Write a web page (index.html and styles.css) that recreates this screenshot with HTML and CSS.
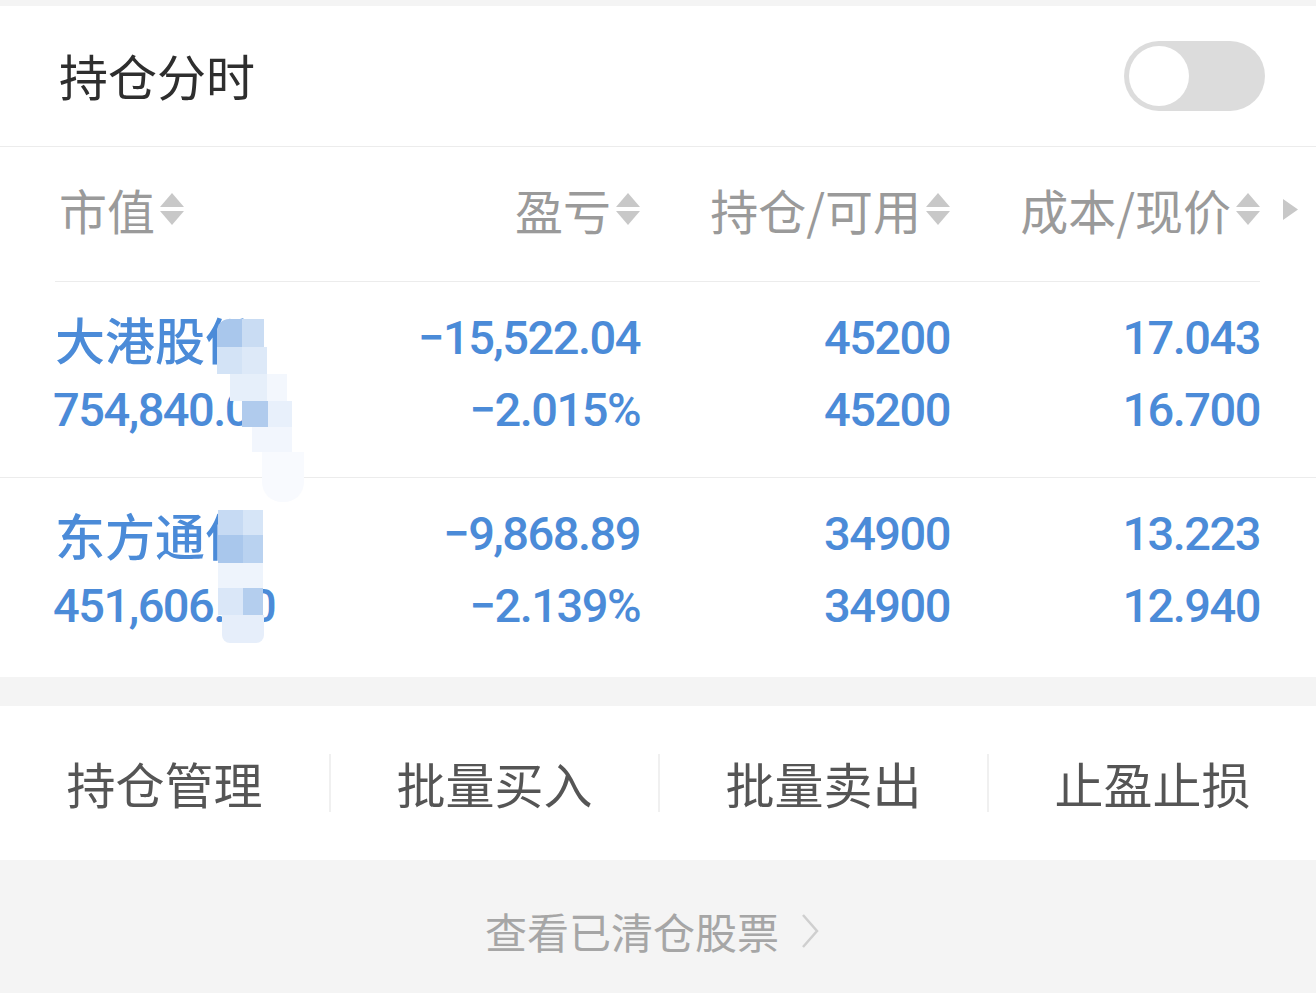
FILE: index.html
```html
<!DOCTYPE html>
<html>
<head>
    <meta charset="utf-8">
    <title>持仓</title>
    <link rel="stylesheet" href="styles.css">
</head>
<body>
    <div class="top-gap"></div>

    <!-- title row with switch -->
    <div class="title-row">
        <span class="title">持仓分时</span>
        <div class="switch"><div class="knob"></div></div>
    </div>

    <div class="holdings">
        <div class="thead">
            <div class="th th-first">市值
                <svg class="sort" viewBox="0 0 24 32"><polygon points="0,14 12,0 24,14"/><polygon points="0,18 24,18 12,32"/></svg>
            </div>
            <div class="th">盈亏
                <svg class="sort" viewBox="0 0 24 32"><polygon points="0,14 12,0 24,14"/><polygon points="0,18 24,18 12,32"/></svg>
            </div>
            <div class="th">持仓/可用
                <svg class="sort" viewBox="0 0 24 32"><polygon points="0,14 12,0 24,14"/><polygon points="0,18 24,18 12,32"/></svg>
            </div>
            <div class="th">成本/现价
                <svg class="sort" viewBox="0 0 24 32"><polygon points="0,14 12,0 24,14"/><polygon points="0,18 24,18 12,32"/></svg>
            </div>
            <div class="th-more">
                <svg class="more" viewBox="0 0 15 21"><polygon points="0,0 15,10.5 0,21"/></svg>
            </div>
        </div>
        <div class="thead-line"></div>

        <div class="row">
            <div class="cell cell-name">
                <div class="name">大港股份</div>
                <div class="num">754,840.00</div>
            </div>
            <div class="cell"><div class="num">−15,522.04</div><div class="num">−2.015%</div></div>
            <div class="cell"><div class="num">45200</div><div class="num">45200</div></div>
            <div class="cell"><div class="num">17.043</div><div class="num">16.700</div></div>
            <!-- mosaic over the name -->
            <div class="mosaic">
                <i class="b1" style="left:217px;top:37px;width:25px;height:28px;background:#a9c7ec;border-top-left-radius:12px"></i>
                <i class="b1" style="left:242px;top:37px;width:22px;height:28px;background:#c9dcf3"></i>
                <i class="b1" style="left:217px;top:65px;width:25px;height:27px;background:#d3e3f6"></i>
                <i class="b1" style="left:242px;top:65px;width:25px;height:27px;background:#dde9f8"></i>
                <i class="b1" style="left:230px;top:92px;width:37px;height:27px;background:#e6effa"></i>
                <i class="b1" style="left:267px;top:92px;width:20px;height:27px;background:#f3f7fd"></i>
                <i class="b1" style="left:242px;top:119px;width:26px;height:26px;background:#b0cbed"></i>
                <i class="b1" style="left:268px;top:119px;width:24px;height:26px;background:#e8f0fb"></i>
                <i class="b1" style="left:252px;top:145px;width:40px;height:25px;background:#f2f6fd"></i>
                <i class="b1" style="left:262px;top:170px;width:42px;height:50px;background:#f8fafe;border-radius:0 0 20px 20px"></i>
            </div>
        </div>
        <div class="row-line"></div>

        <div class="row">
            <div class="cell cell-name">
                <div class="name">东方通信</div>
                <div class="num">451,606.00</div>
            </div>
            <div class="cell"><div class="num">−9,868.89</div><div class="num">−2.139%</div></div>
            <div class="cell"><div class="num">34900</div><div class="num">34900</div></div>
            <div class="cell"><div class="num">13.223</div><div class="num">12.940</div></div>
            <div class="mosaic">
                <i class="b1" style="left:218px;top:32px;width:25px;height:25px;background:#c6daf3"></i>
                <i class="b1" style="left:243px;top:32px;width:20px;height:25px;background:#d6e5f7"></i>
                <i class="b1" style="left:218px;top:57px;width:25px;height:28px;background:#a9c7ec"></i>
                <i class="b1" style="left:243px;top:57px;width:20px;height:28px;background:#b9d2f0"></i>
                <i class="b1" style="left:218px;top:85px;width:45px;height:25px;background:#eef4fc"></i>
                <i class="b1" style="left:218px;top:110px;width:25px;height:27px;background:#dae7f8"></i>
                <i class="b1" style="left:243px;top:110px;width:20px;height:27px;background:#b4ceee"></i>
                <i class="b1" style="left:222px;top:137px;width:42px;height:28px;background:#e6eefa;border-radius:0 0 8px 8px"></i>
            </div>
        </div>
    </div>

    <!-- actions -->
    <div class="actions">
        <div class="action">持仓管理</div>
        <div class="action">批量买入</div>
        <div class="action">批量卖出</div>
        <div class="action">止盈止损</div>
    </div>

    <div class="footer">
        <span class="footer-text">查看已清仓股票</span>
        <svg class="chev" viewBox="0 0 18 36"><polyline points="2,2 16,18 2,34"/></svg>
    </div>
</body>
</html>
```

FILE: styles.css
```css
/* holdings page */
body {
    margin: 0;
    background-color: #f4f4f4;
    font-family: "Noto Sans CJK SC", "Noto Sans", sans-serif;
}

.top-gap {
    height: 6px;
}

.title-row {
    height: 141px;
    box-sizing: border-box;
    background-color: #fff;
    display: flex;
    align-items: center;
    justify-content: space-between;
    padding: 0 51px 4px 59px;
    border-bottom: 1px solid #ececec;
}

.title-row .switch {
    margin-top: 4px;
}

.title {
    font-size: 49px;
    color: #2e2e2e;
}

.switch {
    width: 141px;
    height: 70px;
    border-radius: 35px;
    background-color: #dcdcdc;
    display: flex;
    align-items: center;
    padding-left: 5px;
    box-sizing: border-box;
}

.knob {
    width: 60px;
    height: 60px;
    border-radius: 50%;
    background-color: #fff;
}

.holdings {
    background-color: #fff;
    padding-bottom: 4px;
}

.thead {
    height: 134px;
    box-sizing: border-box;
    padding-bottom: 10px;
    margin-left: 55px;
    display: grid;
    grid-template-columns: 275px 310px 310px 310px 56px;
    align-items: center;
}

.th {
    display: flex;
    align-items: center;
    justify-content: flex-end;
    gap: 5px;
    font-size: 48px;
    color: #9a9a9a;
}

.th-first {
    justify-content: flex-start;
    padding-left: 4px;
}

.sort {
    width: 24px;
    height: 36px;
    fill: #c8c8c8;
}

.th-more {
    padding-left: 23px;
    display: flex;
    align-items: center;
}

.more {
    width: 15px;
    height: 21px;
    fill: #c8c8c8;
}

.thead-line {
    height: 1px;
    margin: 0 56px 0 55px;
    background-color: #ececec;
}

.row {
    position: relative;
    height: 195px;
    box-sizing: border-box;
    padding: 20px 56px 0 55px;
    display: grid;
    grid-template-columns: 275px 310px 310px 310px;
    align-items: start;
}

.row-line {
    height: 1px;
    background-color: #ececec;
}

.cell {
    text-align: right;
    color: #4b8bd8;
}

.cell-name {
    text-align: left;
    white-space: nowrap;
}

.name {
    font-size: 50px;
    font-weight: 500;
    line-height: 72px;
}

.num {
    font-family: Roboto, "Liberation Sans", sans-serif;
    font-size: 47px;
    font-weight: 500;
    letter-spacing: -1.5px;
    line-height: 72px;
}

.cell-name .num {
    margin-left: -2px;
}

.mosaic .b1 {
    position: absolute;
    display: block;
}

.actions {
    margin-top: 29px;
    height: 154px;
    background-color: #fff;
    display: grid;
    grid-template-columns: repeat(4, 1fr);
    align-items: center;
}

.action {
    height: 58px;
    line-height: 58px;
    text-align: center;
    font-size: 49px;
    color: #555;
    border-left: 2px solid #f0f0f0;
}

.action:first-child {
    border-left: none;
}

.footer {
    height: 133px;
    box-sizing: border-box;
    padding: 8px 12px 0 0;
    display: flex;
    align-items: center;
    justify-content: center;
    gap: 22px;
}

.footer-text {
    font-size: 42px;
    color: #a6a6a6;
}

.chev {
    width: 18px;
    height: 36px;
    fill: none;
    stroke: #cfcfcf;
    stroke-width: 2.5;
}
```
